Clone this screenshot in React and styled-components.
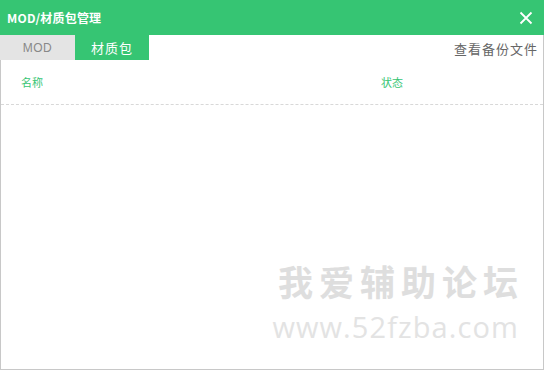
import React from 'react'
import styled, { createGlobalStyle } from 'styled-components'

const GREEN = '#36c573'

const Global = createGlobalStyle`
  html, body {
    margin: 0;
    padding: 0;
    background: #fff;
  }
  body {
    font-family: "Noto Sans CJK SC", "Noto Sans", sans-serif;
  }
`

const tabs = ['MOD', '材质包']

export default () => {
  const active = 1

  return (
    <Window>
      <Global />
      <TitleBar>
        <Title>MOD/材质包管理</Title>
        <CloseBtn aria-label="close">
          <svg width="14" height="14" viewBox="0 0 14 14">
            <path d="M1.5 1.5 L12.5 12.5 M12.5 1.5 L1.5 12.5" stroke="#fff" strokeWidth="1.8" fill="none" />
          </svg>
        </CloseBtn>
      </TitleBar>
      <Body>
        <TabRow>
          <Tabs>
            {tabs.map((t, i) => (
              <Tab key={t} $active={i === active}>{t}</Tab>
            ))}
          </Tabs>
          <BackupLink>查看备份文件</BackupLink>
        </TabRow>
        <HeaderRow>
          <NameCol>名称</NameCol>
          <StateCol>状态</StateCol>
        </HeaderRow>
        <ListArea>
          <Watermark>
            <WmTitle>我爱辅助论坛</WmTitle>
            <WmUrl>www.52fzba.com</WmUrl>
          </Watermark>
        </ListArea>
      </Body>
    </Window>
  )
}

const Window = styled.div`
  width: 544px;
  height: 370px;
  display: flex;
  flex-direction: column;
  box-sizing: border-box;
  overflow: hidden;
`

const TitleBar = styled.div`
  height: 35px;
  flex: none;
  background: ${GREEN};
  display: flex;
  align-items: center;
  justify-content: space-between;
  padding: 0 10px 0 7px;
`

const Title = styled.span`
  color: #fff;
  font-size: 12px;
  font-weight: 700;
  letter-spacing: 0.2px;
`

const CloseBtn = styled.span`
  display: flex;
  width: 14px;
  height: 14px;
  margin-right: 1px;
`

const Body = styled.div`
  flex: 1;
  display: flex;
  flex-direction: column;
  border: 1px solid #c8c8c8;
  border-top: none;
`

const TabRow = styled.div`
  height: 25px;
  display: flex;
  align-items: stretch;
  justify-content: space-between;
  margin-left: -1px;
`

const Tabs = styled.div`
  display: flex;
`

const Tab = styled.div`
  width: ${p => (p.$active ? '74px' : '75px')};
  display: flex;
  align-items: center;
  justify-content: center;
  font-size: ${p => (p.$active ? '13px' : '12px')};
  font-family: ${p => (p.$active ? '"Noto Sans CJK SC", sans-serif' : '"Liberation Sans", "Noto Sans CJK SC", sans-serif')};
  letter-spacing: ${p => (p.$active ? '1px' : '0.5px')};
  background: ${p => (p.$active ? GREEN : '#e4e4e4')};
  color: ${p => (p.$active ? '#fff' : '#888')};
`

const BackupLink = styled.span`
  display: flex;
  align-items: center;
  padding-right: 5px;
  padding-top: 1px;
  font-size: 13px;
  color: #666;
  letter-spacing: 1px;
`

const HeaderRow = styled.div`
  height: 44px;
  display: flex;
  align-items: center;
  border-bottom: 1px dashed #d8d8d8;
  font-size: 11px;
  color: ${GREEN};
`

const NameCol = styled.span`
  width: 360px;
  padding-left: 20px;
`

const StateCol = styled.span``

const ListArea = styled.div`
  flex: 1;
  display: flex;
  justify-content: flex-end;
  align-items: flex-end;
`

const Watermark = styled.div`
  display: flex;
  flex-direction: column;
  align-items: flex-end;
  padding: 0 25px 24px 0;
`

const WmTitle = styled.div`
  font-size: 35px;
  font-weight: 700;
  color: #dedede;
  letter-spacing: 6px;
  margin-right: -6px;
  line-height: 44px;
`

const WmUrl = styled.div`
  font-family: "Open Sans", "DejaVu Sans", sans-serif;
  font-size: 29px;
  color: #e3e3e3;
  letter-spacing: 1.1px;
  line-height: 36px;
  margin-top: 6px;
  margin-right: -1px;
`
